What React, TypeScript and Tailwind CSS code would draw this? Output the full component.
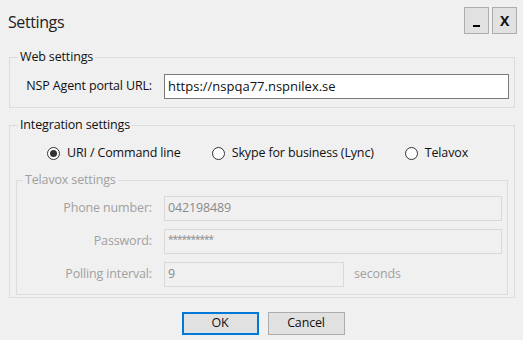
import React from "react";

function Radio({ checked, label }: { checked?: boolean; label: string }) {
  return (
    <label className="flex items-center gap-[7px]">
      <span className="w-[13px] h-[13px] rounded-full border border-[#333333] bg-white flex items-center justify-center">
        {checked && <span className="w-[7px] h-[7px] rounded-full bg-[#333333]" />}
      </span>
      <span>{label}</span>
    </label>
  );
}

function Row({ label, value, width, suffix, small }: { label: string; value: string; width?: string; suffix?: string; small?: boolean }) {
  return (
    <div className="flex items-center">
      <div className="w-[135px] text-right shrink-0 text-[#a0a0a0]">{label}</div>
      <div
        className={`ml-[12px] h-[25px] border border-[#d9d9d9] bg-[#f0f0f0] flex items-center px-[3px] text-[#8a8a8a] ${width ?? "flex-1"} ${
          small ? "text-[10px] tracking-[-1px] pb-[4px]" : ""
        }`}
      >
        {value}
      </div>
      {suffix && <div className="ml-[10px] text-[#a0a0a0]">{suffix}</div>}
    </div>
  );
}

export default function App() {
  return (
    <div className="w-[523px] h-[340px] bg-[#f0f0f0] font-['Open_Sans',sans-serif] text-[12.5px] tracking-[-0.15px] text-[#111111] overflow-hidden">
      <div className="h-[48px] flex justify-between items-start pl-[8px] pr-[6px] pt-[7px]">
        <div className="text-[16px] leading-[22px] mt-[4px] tracking-[-0.4px] text-[#222222]">Settings</div>
        <div className="flex gap-[3px]">
          <button className="w-[25px] h-[27px] border border-[#adadad] bg-[#e1e1e1] flex items-end justify-center pb-[6px]">
            <span className="w-[7px] h-[2px] bg-black" />
          </button>
          <button className="w-[25px] h-[27px] border border-[#adadad] bg-[#e1e1e1] flex items-center justify-center text-[14px] font-bold">
            X
          </button>
        </div>
      </div>

      <div className="pl-[9px] pr-[8px]">
        <fieldset className="border border-[#dcdcdc] pb-[8px] pr-[5px]">
          <legend className="ml-[8px] px-[2px] leading-[18px]">Web settings</legend>
          <div className="flex items-center pt-[8px]">
            <div className="w-[142px] text-right shrink-0">NSP Agent portal URL:</div>
            <div className="ml-[12px] flex-1 h-[25px] border border-[#7a7a7a] bg-white flex items-center px-[3px] text-[13px] tracking-[0px]">
              https://nspqa77.nspnilex.se
            </div>
          </div>
        </fieldset>

        <fieldset className="mt-[8px] border border-[#dcdcdc] pb-[2px]">
          <legend className="ml-[8px] px-[2px] leading-[18px]">Integration settings</legend>
          <div className="flex items-center gap-[31px] pl-[37px] pt-[10px] leading-[18px]">
            <Radio checked label="URI / Command line" />
            <Radio label="Skype for business (Lync)" />
            <Radio label="Telavox" />
          </div>
          <fieldset className="mt-[9px] mx-[6px] border border-[#dcdcdc] pb-[7px] pr-[5px]">
            <legend className="ml-[6px] px-[2px] leading-[18px] text-[#a0a0a0]">Telavox settings</legend>
            <div className="flex flex-col gap-[8px] pt-[7px]">
              <Row label="Phone number:" value="042198489" />
              <Row label="Password:" value="**********" small />
              <Row label="Polling interval:" value="9" width="w-[180px]" suffix="seconds" />
            </div>
          </fieldset>
        </fieldset>

        <div className="flex justify-center gap-[9px] mt-[14px] pl-[2px]">
          <button className="w-[77px] h-[23px] border-2 border-[#0078d7] bg-[#e1e1e1]">OK</button>
          <button className="w-[77px] h-[23px] border border-[#adadad] bg-[#e1e1e1]">Cancel</button>
        </div>
      </div>
    </div>
  );
}
